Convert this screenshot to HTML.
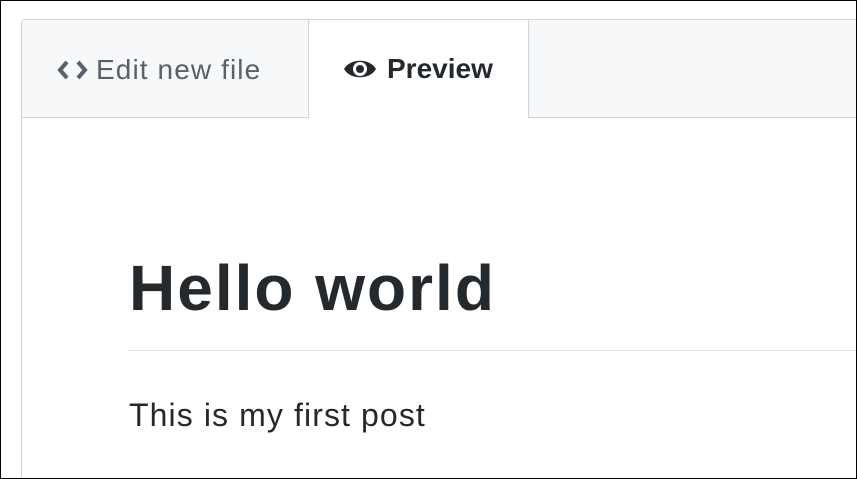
<!DOCTYPE html>
<html><head><style>
html,body{margin:0;padding:0;width:857px;height:479px;overflow:hidden;}
body{background:#fff;position:relative;font-family:"Liberation Sans","DejaVu Sans",sans-serif;}
.frame{position:absolute;left:0;top:0;width:855px;height:477px;border:1px solid #000;z-index:5;pointer-events:none;}
.card{position:absolute;left:21px;top:19px;width:850px;height:470px;border:1px solid #d1d5da;border-radius:4px;overflow:hidden;background:#fff;}
.bar{position:absolute;left:0;top:0;right:0;height:97px;background:#f6f8fa;border-bottom:1px solid #d1d5da;}
.tab1{position:absolute;left:0;top:1px;width:286px;height:97px;display:flex;align-items:center;padding-left:35px;box-sizing:border-box;color:#586069;font-size:28px;letter-spacing:1.1px;}
.tab2{position:absolute;left:286px;top:-1px;width:221px;height:99px;background:#fff;border-left:1px solid #d1d5da;border-right:1px solid #d1d5da;box-sizing:border-box;display:flex;align-items:center;padding-left:34px;color:#24292e;font-size:28px;font-weight:bold;}
h1{position:absolute;left:107px;top:231px;margin:0;font-size:64px;font-weight:bold;color:#24292e;letter-spacing:2px;}
.hr{position:absolute;left:106px;top:330px;width:800px;height:1px;background:#e1e4e8;}
p{position:absolute;left:107px;top:377px;margin:0;font-size:32px;color:#24292e;letter-spacing:1.1px;}
</style></head><body>
<div class="frame"></div>
<div class="card">
<div class="bar"></div>
<div class="tab1"><svg width="32" height="22" viewBox="0 0 32 22" style="margin-right:7px"><path d="M10 3 L3 11 L10 19" fill="none" stroke="#586069" stroke-width="4"/><path d="M21 3 L28 11 L21 19" fill="none" stroke="#586069" stroke-width="4"/></svg>Edit new file</div>
<div class="tab2"><svg width="34" height="26" viewBox="0 0 34 26" style="margin-right:10px"><path d="M1 13 C7 2 27 2 33 13 C27 24 7 24 1 13Z" fill="#24292e"/><circle cx="17" cy="13" r="7" fill="#fff"/><circle cx="17" cy="13" r="4" fill="#24292e"/></svg>Preview</div>
<h1>Hello world</h1>
<div class="hr"></div>
<p>This is my first post</p>
</div>
</body></html>
